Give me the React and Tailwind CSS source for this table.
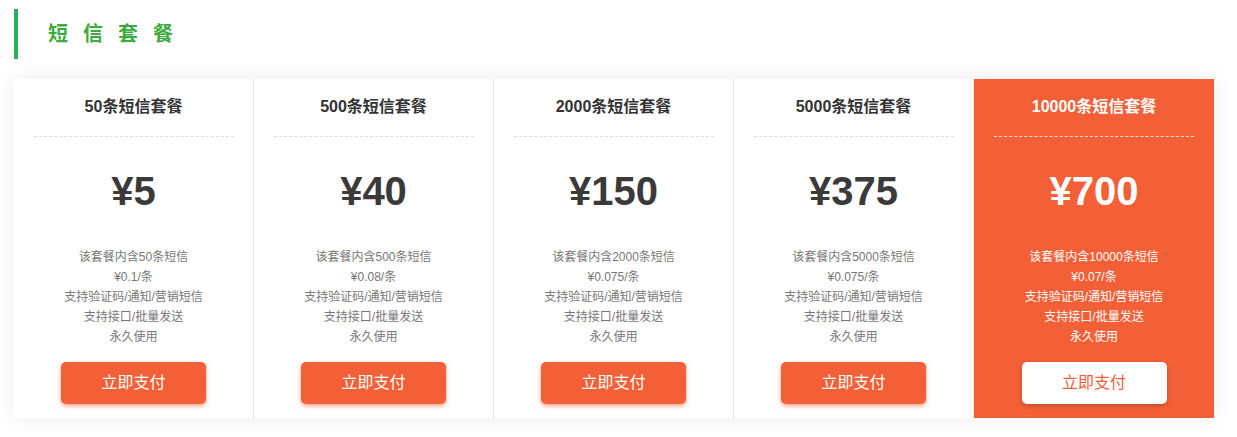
import React from "react";

const plans = [
  { n: "50", price: "5", unit: "0.1" },
  { n: "500", price: "40", unit: "0.08" },
  { n: "2000", price: "150", unit: "0.075" },
  { n: "5000", price: "375", unit: "0.075" },
  { n: "10000", price: "700", unit: "0.07", hot: true },
];

export default function App() {
  return (
    <div
      className="w-[1237px] h-[437px] bg-white pt-[9px]"
      style={{ fontFamily: '"Liberation Sans", "Noto Sans CJK SC", sans-serif' }}
    >
      <div className="ml-[14px] h-[50px] border-l-4 border-[#2bb05a] flex items-center pl-[30px]">
        <span className="text-[20px] font-bold text-[#3aab3c] tracking-[15px] leading-none">短信套餐</span>
      </div>
      <div className="ml-[14px] mt-[20px] w-[1200px] grid grid-cols-5 shadow-[0_0_20px_rgba(0,0,0,0.08)]">
        {plans.map((p, i) => (
          <div
            key={i}
            className={
              p.hot
                ? "bg-[#f35f37] text-white pt-[18px] pb-[14px] flex flex-col items-center"
                : "bg-white border-r border-[#e3e3e3] pt-[18px] pb-[14px] flex flex-col items-center"
            }
          >
            <div
              className={
                p.hot
                  ? "w-[200px] text-center text-[16px] font-bold leading-[20px] pb-[19px] border-b border-dashed border-[#ffe5dc]"
                  : "w-[200px] text-center text-[16px] font-bold leading-[20px] pb-[19px] border-b border-dashed border-[#dddddd] text-[#333]"
              }
            >
              {p.n}条短信套餐
            </div>
            <div
              className={
                p.hot
                  ? "mt-[34px] text-[40px] font-bold leading-[40px] text-white"
                  : "mt-[34px] text-[40px] font-bold leading-[40px] text-[#3a3a3a]"
              }
            >
              ¥{p.price}
            </div>
            <div
              className={
                p.hot
                  ? "mt-[36px] text-[12px] leading-[20px] text-center text-white"
                  : "mt-[36px] text-[12px] leading-[20px] text-center text-[#777]"
              }
            >
              <div>该套餐内含{p.n}条短信</div>
              <div>¥{p.unit}/条</div>
              <div>支持验证码/通知/营销短信</div>
              <div>支持接口/批量发送</div>
              <div>永久使用</div>
            </div>
            <button
              className={
                p.hot
                  ? "mt-[15px] w-[145px] h-[42px] rounded-[5px] bg-white text-[#f35f37] text-[16px] shadow-[0_2px_4px_rgba(0,0,0,0.2)]"
                  : "mt-[15px] w-[145px] h-[42px] rounded-[5px] bg-[#f35f37] text-white text-[16px] shadow-[0_2px_4px_rgba(243,95,55,0.6)]"
              }
            >
              立即支付
            </button>
          </div>
        ))}
      </div>
    </div>
  );
}
